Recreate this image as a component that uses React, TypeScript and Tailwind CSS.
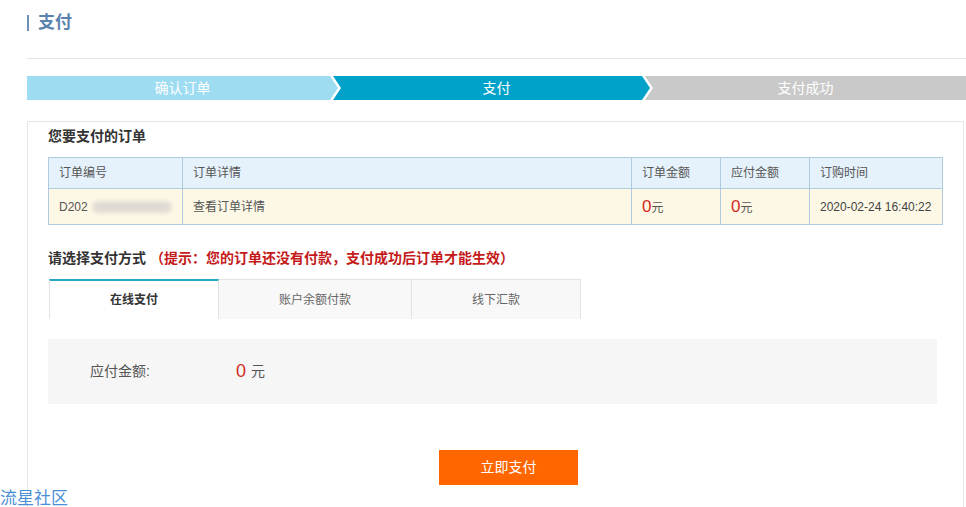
import React from 'react'

const font = { fontFamily: '"Liberation Sans", "Noto Sans CJK SC", sans-serif' }

const steps = [
  { label: '确认订单', cls: 'bg-[#9edcf2] w-[311px] [clip-path:polygon(0_0,calc(100%_-_8px)_0,100%_50%,calc(100%_-_8px)_100%,0_100%)]' },
  { label: '支付', cls: 'bg-[#00a2ca] w-[317px] -ml-[5px] pl-[10px] [clip-path:polygon(0_0,calc(100%_-_8px)_0,100%_50%,calc(100%_-_8px)_100%,0_100%,8px_50%)]' },
  { label: '支付成功', cls: 'bg-[#c9c9c9] flex-1 -ml-[5px] [clip-path:polygon(0_0,100%_0,100%_100%,0_100%,8px_50%)]' },
]

export default function App() {
  return (
    <div className="w-[966px] h-[507px] overflow-hidden bg-white relative" style={font}>
      <div className="pl-[27px]">
        {/* title */}
        <div className="h-[59px] pt-[12px] border-b border-[#e3e3e3]">
          <div className="flex items-center gap-[9px]">
            <span className="block w-[2px] h-[16px] bg-[#6e90b5]" />
            <span className="text-[17px] font-bold text-[#5a82ad] leading-[22px]">支付</span>
          </div>
        </div>

        {/* steps */}
        <div className="mt-[17px] flex h-[24px]">
          {steps.map((s) => (
            <div key={s.label} className={`${s.cls} flex items-center justify-center text-[14px] text-white`}>
              {s.label}
            </div>
          ))}
        </div>

        {/* content box */}
        <div className="mt-[21px] w-[937px] h-[420px] border border-[#e6e6e6] pl-[20px] pr-[20px] pt-[5px]">
          <div className="text-[14px] font-bold text-[#333] leading-[19px]">您要支付的订单</div>

          <table className="mt-[11px] w-[895px] border-collapse text-[12px] text-[#555]">
            <thead>
              <tr className="bg-[#e5f1fb] h-[31px]">
                <td className="border border-[#aecbe0] w-[134px] pl-[10px]">订单编号</td>
                <td className="border border-[#aecbe0] w-[449px] pl-[10px]">订单详情</td>
                <td className="border border-[#aecbe0] w-[89px] pl-[10px]">订单金额</td>
                <td className="border border-[#aecbe0] w-[89px] pl-[10px]">应付金额</td>
                <td className="border border-[#aecbe0] pl-[10px]">订购时间</td>
              </tr>
            </thead>
            <tbody>
              <tr className="bg-[#fdf8e6] h-[36px]">
                <td className="border border-[#aecbe0] pl-[10px]">
                  <span className="flex items-center">
                    D202
                    <span className="inline-block ml-[4px] w-[80px] h-[12px] rounded-full bg-[#e0dbd2] blur-[2px]" />
                  </span>
                </td>
                <td className="border border-[#aecbe0] pl-[10px]">查看订单详情</td>
                <td className="border border-[#aecbe0] pl-[10px]">
                  <span className="text-[17px] text-[#d42a1e]">0</span>元
                </td>
                <td className="border border-[#aecbe0] pl-[10px]">
                  <span className="text-[17px] text-[#d42a1e]">0</span>元
                </td>
                <td className="border border-[#aecbe0] pl-[10px] text-[#444]">2020-02-24 16:40:22</td>
              </tr>
            </tbody>
          </table>

          <div className="mt-[24px] text-[14px] font-bold leading-[19px]">
            <span className="text-[#333]">请选择支付方式</span>
            <span className="text-[#c41a1a] ml-[4px]">（提示：您的订单还没有付款，支付成功后订单才能生效）</span>
          </div>

          <div className="mt-[11px] flex text-[12px] h-[40px] ml-[1px]">
            <div className="w-[170px] border-l border-r border-[#e3e3e3] border-t-2 border-t-[#2aa6c6] bg-white flex items-center justify-center font-bold text-[#333]">在线支付</div>
            <div className="w-[193px] border-t border-r border-[#e3e3e3] bg-[#f8f8f8] flex items-center justify-center text-[#666]">账户余额付款</div>
            <div className="w-[169px] border-t border-r border-[#e3e3e3] bg-[#f8f8f8] flex items-center justify-center text-[#666]">线下汇款</div>
          </div>

          <div className="mt-[20px] w-[889px] h-[65px] bg-[#f6f6f6] flex items-center pl-[42px]">
            <span className="text-[14px] text-[#555] w-[146px]">应付金额:</span>
            <span className="text-[18px] text-[#d42a1e]">0</span>
            <span className="text-[14px] text-[#555] ml-[5px]">元</span>
          </div>

          <div className="mt-[46px] pl-[391px]">
            <button className="w-[139px] h-[35px] bg-[#ff6600] text-white text-[14px]">立即支付</button>
          </div>
        </div>
      </div>

      <div className="absolute left-0 bottom-[-3px] text-[17px] text-[#4b8fd6] leading-[22px]">流星社区</div>
    </div>
  )
}
